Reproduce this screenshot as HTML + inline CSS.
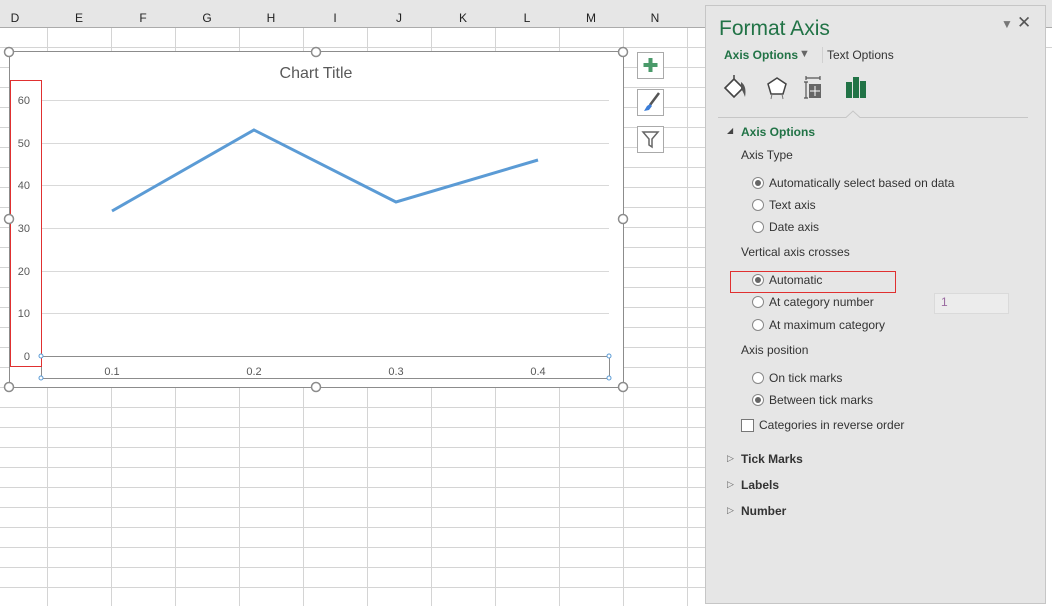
<!DOCTYPE html>
<html><head><style>
body{margin:0;width:1052px;height:606px;overflow:hidden;position:relative;background:#fff;font-family:"Liberation Sans",sans-serif;}
.a{position:absolute;}
.hdr{left:0;top:0;width:1052px;height:27px;background:#e6e6e6;border-bottom:1px solid #ababab;}
.col{position:absolute;top:0;height:27px;line-height:36px;font-size:12px;color:#222;text-align:center;}
.t{position:absolute;font-size:12px;color:#333;white-space:nowrap;}
.rad{position:absolute;width:10px;height:10px;border:1px solid #888;border-radius:50%;background:#fff;}
.rad.on::after{content:"";position:absolute;left:2px;top:2px;width:6px;height:6px;border-radius:50%;background:#666;}
.sec{position:absolute;font-size:12px;font-weight:bold;color:#333;}
.btn{position:absolute;left:637px;width:26px;height:26px;border:1px solid #aaa;background:#fff;}
</style></head><body>
<svg class="a" style="left:0;top:0" width="1052" height="606">
<g stroke="#d4d4d4" stroke-width="1">
<line x1="47.5" y1="27" x2="47.5" y2="606"/><line x1="111.5" y1="27" x2="111.5" y2="606"/><line x1="175.5" y1="27" x2="175.5" y2="606"/><line x1="239.5" y1="27" x2="239.5" y2="606"/><line x1="303.5" y1="27" x2="303.5" y2="606"/><line x1="367.5" y1="27" x2="367.5" y2="606"/><line x1="431.5" y1="27" x2="431.5" y2="606"/><line x1="495.5" y1="27" x2="495.5" y2="606"/><line x1="559.5" y1="27" x2="559.5" y2="606"/><line x1="623.5" y1="27" x2="623.5" y2="606"/><line x1="687.5" y1="27" x2="687.5" y2="606"/>
<g id="rows"></g>
</g>
</svg>
<div class="a hdr">
<div class="col" style="left:0;width:30px">D</div>
<div class="col" style="left:47px;width:64px">E</div>
<div class="col" style="left:111px;width:64px">F</div>
<div class="col" style="left:175px;width:64px">G</div>
<div class="col" style="left:239px;width:64px">H</div>
<div class="col" style="left:303px;width:64px">I</div>
<div class="col" style="left:367px;width:64px">J</div>
<div class="col" style="left:431px;width:64px">K</div>
<div class="col" style="left:495px;width:64px">L</div>
<div class="col" style="left:559px;width:64px">M</div>
<div class="col" style="left:623px;width:64px">N</div>
</div>
<svg class="a" style="left:0;top:0" width="705" height="606">
<g stroke="#d4d4d4">
<line x1="0" y1="47.5" x2="705" y2="47.5"/><line x1="0" y1="67.5" x2="705" y2="67.5"/><line x1="0" y1="87.5" x2="705" y2="87.5"/><line x1="0" y1="107.5" x2="705" y2="107.5"/><line x1="0" y1="127.5" x2="705" y2="127.5"/><line x1="0" y1="147.5" x2="705" y2="147.5"/><line x1="0" y1="167.5" x2="705" y2="167.5"/><line x1="0" y1="187.5" x2="705" y2="187.5"/><line x1="0" y1="207.5" x2="705" y2="207.5"/><line x1="0" y1="227.5" x2="705" y2="227.5"/><line x1="0" y1="247.5" x2="705" y2="247.5"/><line x1="0" y1="267.5" x2="705" y2="267.5"/><line x1="0" y1="287.5" x2="705" y2="287.5"/><line x1="0" y1="307.5" x2="705" y2="307.5"/><line x1="0" y1="327.5" x2="705" y2="327.5"/><line x1="0" y1="347.5" x2="705" y2="347.5"/><line x1="0" y1="367.5" x2="705" y2="367.5"/><line x1="0" y1="387.5" x2="705" y2="387.5"/><line x1="0" y1="407.5" x2="705" y2="407.5"/><line x1="0" y1="427.5" x2="705" y2="427.5"/><line x1="0" y1="447.5" x2="705" y2="447.5"/><line x1="0" y1="467.5" x2="705" y2="467.5"/><line x1="0" y1="487.5" x2="705" y2="487.5"/><line x1="0" y1="507.5" x2="705" y2="507.5"/><line x1="0" y1="527.5" x2="705" y2="527.5"/><line x1="0" y1="547.5" x2="705" y2="547.5"/><line x1="0" y1="567.5" x2="705" y2="567.5"/><line x1="0" y1="587.5" x2="705" y2="587.5"/>
</g>
<rect x="9.5" y="51.5" width="614" height="336" fill="#fff" stroke="#8c8c8c"/>
<text x="316" y="78" font-size="16" fill="#595959" text-anchor="middle" font-family="Liberation Sans">Chart Title</text>
<g stroke="#d9d9d9"><line x1="41" y1="100.5" x2="609" y2="100.5"/><line x1="41" y1="143.5" x2="609" y2="143.5"/><line x1="41" y1="185.5" x2="609" y2="185.5"/><line x1="41" y1="228.5" x2="609" y2="228.5"/><line x1="41" y1="271.5" x2="609" y2="271.5"/><line x1="41" y1="313.5" x2="609" y2="313.5"/></g>
<line x1="41" y1="356.5" x2="609" y2="356.5" stroke="#8c8c8c"/>
<rect x="41.5" y="356.5" width="568" height="22" fill="none" stroke="#8c8c8c"/>
<g font-size="11" fill="#595959" font-family="Liberation Sans" text-anchor="end">
<text x="30" y="104">60</text><text x="30" y="147">50</text><text x="30" y="189">40</text><text x="30" y="232">30</text><text x="30" y="275">20</text><text x="30" y="317">10</text><text x="30" y="360">0</text></g>
<g font-size="11" fill="#595959" font-family="Liberation Sans" text-anchor="middle">
<text x="112" y="375">0.1</text><text x="254" y="375">0.2</text><text x="396" y="375">0.3</text><text x="538" y="375">0.4</text></g>
<polyline points="112,211 254,130 396,202 538,160" fill="none" stroke="#5b9bd5" stroke-width="3"/>
<rect x="10.5" y="80.5" width="31" height="286" fill="none" stroke="#e03030"/>
<g fill="#fff" stroke="#5b9bd5"><circle cx="41" cy="356" r="2"/><circle cx="609" cy="356" r="2"/><circle cx="41" cy="378" r="2"/><circle cx="609" cy="378" r="2"/></g>
<g fill="#fff" stroke="#8c8c8c" stroke-width="1.5"><circle cx="9" cy="52" r="4.5"/><circle cx="316" cy="52" r="4.5"/><circle cx="623" cy="52" r="4.5"/><circle cx="9" cy="219" r="4.5"/><circle cx="623" cy="219" r="4.5"/><circle cx="9" cy="387" r="4.5"/><circle cx="316" cy="387" r="4.5"/><circle cx="623" cy="387" r="4.5"/></g>
<rect x="637.5" y="52.5" width="26" height="26" fill="#fff" stroke="#aaa"/>
<path d="M650.5 58v14M643.5 65h14" stroke="#4a9a6a" stroke-width="4"/>
<rect x="637.5" y="89.5" width="26" height="26" fill="#fff" stroke="#aaa"/>
<path d="M659 93 L650 105" stroke="#555" stroke-width="2.5"/><path d="M650 104 l-3 2 -3 5 5 -1 3 -4z" fill="#3b7dd8"/>
<rect x="637.5" y="126.5" width="26" height="26" fill="#fff" stroke="#aaa"/>
<path d="M643 132h15l-6 7v8l-3 -2v-6z" fill="#fff" stroke="#666" stroke-width="1.5"/>
</svg>
<svg class="a" style="left:1045px;top:0" width="7" height="606"><g stroke="#d4d4d4"><line x1="0" y1="47.5" x2="7" y2="47.5"/></g></svg>
<div class="a" style="left:705px;top:5px;width:339px;height:597px;background:#e6e6e6;border:1px solid #c6c6c6;"></div>
<div class="t" style="left:719px;top:17px;font-size:21px;color:#217346;">Format Axis</div>
<div class="t" style="left:1001px;top:17px;font-size:12px;color:#777;">&#9660;</div>
<div class="t" style="left:1017px;top:13px;font-size:17px;color:#555;">&#10005;</div>
<div class="t" style="left:724px;top:48px;font-weight:bold;color:#217346;">Axis Options</div>
<div class="t" style="left:799px;top:48px;font-size:11px;color:#666;">&#9660;</div>
<div class="a" style="left:822px;top:47px;width:1px;height:16px;background:#d0d0d0"></div>
<div class="t" style="left:827px;top:48px;">Text Options</div>
<svg class="a" style="left:720px;top:72px" width="160" height="40">
<path d="M5 16 L14 7 L23 16 L14 25Z" fill="#fff" stroke="#444" stroke-width="1.6"/><path d="M14 7 V3" stroke="#444" stroke-width="1.5"/><path d="M21 10 q6 4 4 15 q-2 -6 -4 -8z" fill="#555"/>
<path d="M57 6 L66 12 L63 22 L51 22 L48 12Z" fill="#fff" stroke="#444" stroke-width="1.5"/><path d="M52 22 l-1 5 M62 22 l1 5" stroke="#777"/>
<path d="M86 6 h14 M86 4v4 M100 4v4 M86 10v16 M84 10h4 M84 26h4" stroke="#555" stroke-width="1.2"/><rect x="89" y="12" width="12" height="14" fill="#666"/><path d="M95 14v10M90 19h10" stroke="#fff"/>
<rect x="126" y="10" width="6" height="16" fill="#217346"/><rect x="133" y="5" width="6" height="21" fill="#217346"/><rect x="140" y="9" width="6" height="17" fill="#217346"/>
</svg>
<svg class="a" style="left:718px;top:108px" width="312" height="12"><path d="M0 9.5 H128 L135 3 L142 9.5 H310" fill="none" stroke="#c6c6c6"/></svg>
<div class="t" style="left:727px;top:126px;font-size:8px;color:#444;">&#9698;</div>
<div class="t" style="left:741px;top:125px;font-weight:bold;color:#217346;">Axis Options</div>
<div class="t" style="left:741px;top:148px;">Axis Type</div>
<div class="rad on" style="left:752px;top:177px"></div><div class="t" style="left:769px;top:176px;">Automatically select based on data</div>
<div class="rad" style="left:752px;top:199px"></div><div class="t" style="left:769px;top:198px;">Text axis</div>
<div class="rad" style="left:752px;top:221px"></div><div class="t" style="left:769px;top:220px;">Date axis</div>
<div class="t" style="left:741px;top:245px;">Vertical axis crosses</div>
<div class="a" style="left:730px;top:271px;width:164px;height:20px;border:1px solid #e03030;"></div>
<div class="rad on" style="left:752px;top:274px"></div><div class="t" style="left:769px;top:273px;">Automatic</div>
<div class="rad" style="left:752px;top:296px"></div><div class="t" style="left:769px;top:295px;">At category number</div>
<div class="a" style="left:934px;top:293px;width:73px;height:19px;background:#ececec;border:1px solid #dadada;"></div>
<div class="t" style="left:941px;top:295px;color:#9a6aa0;">1</div>
<div class="rad" style="left:752px;top:319px"></div><div class="t" style="left:769px;top:318px;">At maximum category</div>
<div class="t" style="left:741px;top:343px;">Axis position</div>
<div class="rad" style="left:752px;top:372px"></div><div class="t" style="left:769px;top:371px;">On tick marks</div>
<div class="rad on" style="left:752px;top:394px"></div><div class="t" style="left:769px;top:393px;">Between tick marks</div>
<div class="a" style="left:741px;top:419px;width:11px;height:11px;border:1px solid #777;background:#fff;"></div><div class="t" style="left:759px;top:418px;">Categories in reverse order</div>
<div class="t" style="left:727px;top:453px;font-size:9px;color:#666;">&#9655;</div><div class="sec" style="left:741px;top:452px;">Tick Marks</div>
<div class="t" style="left:727px;top:479px;font-size:9px;color:#666;">&#9655;</div><div class="sec" style="left:741px;top:478px;">Labels</div>
<div class="t" style="left:727px;top:505px;font-size:9px;color:#666;">&#9655;</div><div class="sec" style="left:741px;top:504px;">Number</div>
</body></html>
